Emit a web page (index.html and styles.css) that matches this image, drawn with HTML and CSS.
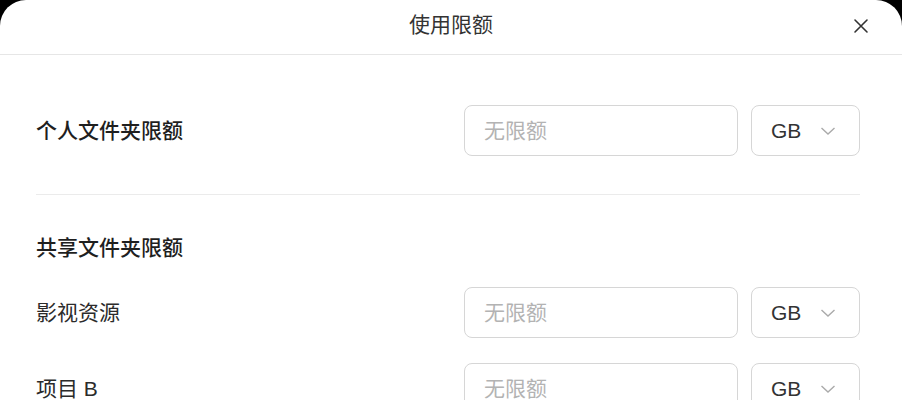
FILE: index.html
```html
<!DOCTYPE html>
<html lang="zh-CN">
<head>
<meta charset="utf-8">
<title>使用限额</title>
<link rel="stylesheet" href="styles.css">
</head>
<body>
<div class="dialog">
  <div class="header">
    <div class="title">使用限额</div>
    <button class="close" aria-label="关闭">
      <svg width="16" height="16" viewBox="0 0 16 16"><path d="M2 2 L14 14 M14 2 L2 14" stroke="#333" stroke-width="1.6" fill="none" stroke-linecap="round"/></svg>
    </button>
  </div>
  <div class="content">
    <div class="row">
      <div class="label strong">个人文件夹限额</div>
      <input class="field" type="text" placeholder="无限额">
      <div class="unit"><span>GB</span><svg width="16" height="10" viewBox="0 0 16 10"><path d="M1.5 2 L8 8 L14.5 2" stroke="#aaa" stroke-width="1.4" fill="none"/></svg></div>
    </div>
    <div class="divider"></div>
    <div class="section-title strong">共享文件夹限额</div>
    <div class="row">
      <div class="label">影视资源</div>
      <input class="field" type="text" placeholder="无限额">
      <div class="unit"><span>GB</span><svg width="16" height="10" viewBox="0 0 16 10"><path d="M1.5 2 L8 8 L14.5 2" stroke="#aaa" stroke-width="1.4" fill="none"/></svg></div>
    </div>
    <div class="row">
      <div class="label">项目 B</div>
      <input class="field" type="text" placeholder="无限额">
      <div class="unit"><span>GB</span><svg width="16" height="10" viewBox="0 0 16 10"><path d="M1.5 2 L8 8 L14.5 2" stroke="#aaa" stroke-width="1.4" fill="none"/></svg></div>
    </div>
  </div>
</div>
</body>
</html>
```
FILE: styles.css
```css
html, body {
  margin: 0;
  padding: 0;
  background: #000;
  height: 100%;
  overflow: hidden;
}
body {
  font-family: "Liberation Sans", "Noto Sans CJK SC", sans-serif;
  color: #333;
}
.dialog {
  background: #fff;
  border-radius: 26px 26px 0 0;
  min-height: 100%;
}
.header {
  box-sizing: border-box;
  height: 55px;
  padding-top: 10px;
  border-bottom: 1px solid #e6e6e6;
  display: flex;
  align-items: flex-start;
  justify-content: center;
  position: relative;
}
.title {
  font-size: 21px;
  color: #333;
  line-height: 30px;
}
.close {
  position: absolute;
  right: 32px;
  top: 17px;
  width: 18px;
  height: 18px;
  padding: 0;
  border: none;
  background: none;
  display: flex;
  align-items: center;
  justify-content: center;
}
.content {
  padding: 50px 42px 0 36px;
}
.row {
  display: flex;
  align-items: center;
  gap: 13px;
  height: 51px;
  margin-bottom: 25px;
}
.label {
  flex: 1;
  font-size: 21px;
  line-height: 30px;
  color: #2b2b2b;
}
.strong {
  font-weight: 500;
  color: #1f1f1f;
}
.field {
  box-sizing: border-box;
  width: 274px;
  height: 51px;
  border: 1px solid #d6d6d6;
  border-radius: 8px;
  padding: 0 19px;
  font-family: inherit;
  font-size: 21px;
  color: #333;
  outline: none;
  margin: 0;
}
.field::placeholder {
  color: #b3b3b3;
}
.unit {
  box-sizing: border-box;
  width: 109px;
  height: 51px;
  border: 1px solid #d6d6d6;
  border-radius: 8px;
  padding: 0 23px 0 19px;
  display: flex;
  align-items: center;
  justify-content: space-between;
  font-size: 21px;
  color: #333;
}
.divider {
  height: 1px;
  background: #ebebeb;
  margin: 38px 0 38px;
}
.section-title {
  font-size: 21px;
  line-height: 30px;
  margin-bottom: 24px;
}
```
